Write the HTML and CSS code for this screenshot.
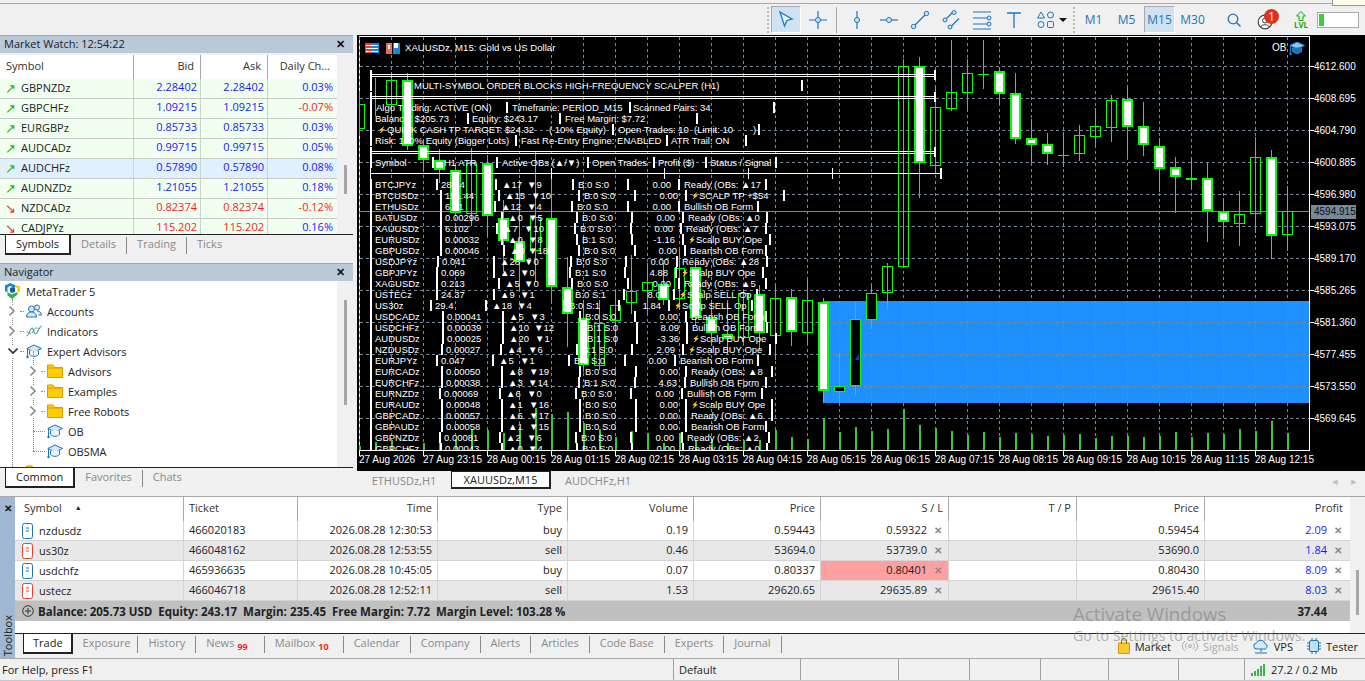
FILE: index.html
```html
<!DOCTYPE html>
<html lang="en">
<head>
    <meta charset="UTF-8">
    <title>MetaTrader 5</title>
    <link rel="stylesheet" href="styles.css">
</head>
<body>
    <svg class="defs" width="0" height="0">
        <symbol id="cap" viewBox="0 0 16 16">
            <path d="M8 2l7.5 3.5L8 9 .8 5.5z" fill="#d5e8f6" stroke="#1b75bb"/>
            <path d="M3.5 7.5v4c2 2.5 7 2.5 9 0v-4" fill="#eef6fc" stroke="#1b75bb"/>
            <path d="M1.5 6v7" stroke="#1b75bb"/>
            <circle cx="1.5" cy="14" r="1.2" fill="#1b75bb"/>
        </symbol>
        <symbol id="cap-on" viewBox="0 0 16 16">
            <path d="M8 2l7.5 3.5L8 9 .8 5.5z" fill="#8cc4ee" stroke="#1b86d6"/>
            <path d="M3.5 7.5v4c2 2.5 7 2.5 9 0v-4" fill="#1b75bb" stroke="#1b86d6"/>
            <path d="M1.5 6v7" stroke="#1b86d6"/>
            <circle cx="1.5" cy="14" r="1.2" fill="#1b86d6"/>
        </symbol>
        <symbol id="folder" viewBox="0 0 16 14">
            <path d="M.5 1h5.5l1.5 2.5h8v10H.5z" fill="#ffcd00" stroke="#d99a00"/>
            <path d="M.5 4h15" stroke="#d99a00"/>
        </symbol>
        <symbol id="chev" viewBox="0 0 8 12">
            <path d="M1.5 1.5L6 6l-4.500 4.500" fill="none" stroke="#8a8a8a" stroke-width="1.600"/>
        </symbol>
        <symbol id="deal" viewBox="0 0 11 16">
            <rect x=".5" y=".5" width="10" height="15" rx="2" fill="#fff" stroke="currentColor"/>
            <path d="M4 5h3M4 8h3" stroke="currentColor"/>
        </symbol>
    </svg>

    <div class="topline"><div class="balloon"></div></div>

    <div class="toolbar">
        <span class="grip"></span>
        <button class="tool is-on">
            <svg width="20" height="20" viewBox="0 0 20 20"><path d="M4 2l12 7-5 1.500L8.500 16z" fill="#eaf3fa" stroke="#1b75bb" stroke-width="1.300"/></svg>
        </button>
        <button class="tool">
            <svg width="20" height="20" viewBox="0 0 20 20"><path d="M10 1v18M1 10h18" stroke="#1b75bb" stroke-width="1.200"/><circle cx="10" cy="10" r="2.500" fill="#cfe3f3" stroke="#1b75bb"/></svg>
        </button>
        <span class="tool-sep"></span>
        <button class="tool">
            <svg width="20" height="20" viewBox="0 0 20 20"><path d="M10 1v18" stroke="#1b75bb" stroke-width="1.200"/><circle cx="10" cy="10" r="2.500" fill="#cfe3f3" stroke="#1b75bb"/></svg>
        </button>
        <button class="tool tight-1">
            <svg width="20" height="20" viewBox="0 0 20 20"><path d="M1 10h18" stroke="#1b75bb" stroke-width="1.200"/><circle cx="10" cy="10" r="2.500" fill="#cfe3f3" stroke="#1b75bb"/></svg>
        </button>
        <button class="tool">
            <svg width="20" height="20" viewBox="0 0 20 20"><path d="M4.500 15.500l11-11" stroke="#1b75bb" stroke-width="1.200"/><circle cx="3.500" cy="16.500" r="2.200" fill="#cfe3f3" stroke="#1b75bb"/><circle cx="16.500" cy="3.500" r="2.200" fill="#cfe3f3" stroke="#1b75bb"/></svg>
        </button>
        <button class="tool tight-2">
            <svg width="20" height="20" viewBox="0 0 20 20"><path d="M3.500 9.500l7-7M8 17.500l9-9" stroke="#1b75bb" stroke-width="1.200"/><circle cx="12" cy="2.500" r="2" fill="#cfe3f3" stroke="#1b75bb"/><circle cx="3" cy="10" r="2" fill="#cfe3f3" stroke="#1b75bb"/><circle cx="8" cy="17" r="2" fill="#cfe3f3" stroke="#1b75bb"/></svg>
        </button>
        <button class="tool">
            <svg width="20" height="20" viewBox="0 0 20 20"><path d="M1 2h18M1 8h15M1 14h15M1 19h18" stroke="#1b75bb" stroke-width="1.200"/><circle cx="17" cy="8" r="2" fill="#cfe3f3" stroke="#1b75bb"/><circle cx="17" cy="14" r="2" fill="#cfe3f3" stroke="#1b75bb"/></svg>
        </button>
        <button class="tool">
            <svg width="20" height="20" viewBox="0 0 20 20"><path d="M3 3h14M10 3v15" stroke="#1b75bb" stroke-width="1.300"/></svg>
        </button>
        <button class="tool tool-shapes">
            <svg width="20" height="20" viewBox="0 0 20 20" fill="#e6f0f8" stroke="#1b75bb"><path d="M5 2l3.500 6h-7z"/><circle cx="14.500" cy="5" r="3"/><circle cx="5" cy="14.500" r="3"/><rect x="11.500" y="11.500" width="6" height="6" rx="1"/></svg>
            <i class="caret"></i>
        </button>
        <span class="grip"></span>
        <button class="tool period">M1</button>
        <button class="tool period">M5</button>
        <button class="tool period is-on">M15</button>
        <button class="tool period">M30</button>
        <button class="tool tool-search">
            <svg width="16" height="16" viewBox="0 0 16 16"><circle cx="7" cy="7" r="4.800" fill="none" stroke="#1b75bb" stroke-width="1.300"/><path d="M10.500 10.500l4 4" stroke="#1b75bb" stroke-width="1.400"/></svg>
        </button>
        <div class="profile">
            <svg width="16" height="16" viewBox="0 0 16 16"><circle cx="8" cy="8" r="6.800" fill="#fff" stroke="#444" stroke-width="1.200"/><circle cx="8" cy="6.500" r="2.500" fill="none" stroke="#444"/><path d="M3.500 13c1-3 8-3 9 0" fill="none" stroke="#444"/></svg>
            <span class="badge">1</span>
        </div>
        <div class="lvl">
            <svg width="12" height="10" viewBox="0 0 12 10"><path d="M6 .5L10.500 5H8v4.500H4V5H1.500z" fill="#d7f5d7" stroke="#18a818"/></svg>
            <span>LVL</span>
        </div>
        <div class="meter"><span class="meter-fill"></span></div>
    </div>

    <div class="main">
        <aside class="side">
            <section class="panel watch">
                <div class="panel-title">Market Watch: 12:54:22<span class="panel-x">✕</span></div>
                <div class="watch-body">
                    <div class="watch-table">
                        <div class="watch-head">
                            <span class="col-sym">Symbol</span><span>Bid</span><span>Ask</span><span>Daily Ch...</span>
                        </div>
                        <div class="watch-row"><span class="col-sym"><i class="up">↗</i>GBPNZDz</span><span class="blue">2.28402</span><span class="blue">2.28402</span><span class="blue">0.03%</span></div>
                        <div class="watch-row"><span class="col-sym"><i class="up">↗</i>GBPCHFz</span><span class="blue">1.09215</span><span class="blue">1.09215</span><span class="red">-0.07%</span></div>
                        <div class="watch-row"><span class="col-sym"><i class="up">↗</i>EURGBPz</span><span class="blue">0.85733</span><span class="blue">0.85733</span><span class="blue">0.03%</span></div>
                        <div class="watch-row"><span class="col-sym"><i class="up">↗</i>AUDCADz</span><span class="blue">0.99715</span><span class="blue">0.99715</span><span class="blue">0.05%</span></div>
                        <div class="watch-row is-sel"><span class="col-sym"><i class="up">↗</i>AUDCHFz</span><span class="blue">0.57890</span><span class="blue">0.57890</span><span class="blue">0.08%</span></div>
                        <div class="watch-row"><span class="col-sym"><i class="up">↗</i>AUDNZDz</span><span class="blue">1.21055</span><span class="blue">1.21055</span><span class="blue">0.18%</span></div>
                        <div class="watch-row"><span class="col-sym"><i class="down">↘</i>NZDCADz</span><span class="red">0.82374</span><span class="red">0.82374</span><span class="red">-0.12%</span></div>
                        <div class="watch-row"><span class="col-sym"><i class="down">↘</i>CADJPYz</span><span class="red">115.202</span><span class="red">115.202</span><span class="blue">0.16%</span></div>
                    </div>
                    <div class="scroll"><span class="thumb thumb-watch"></span></div>
                </div>
                <div class="tabs">
                    <span class="tab is-on">Symbols</span><span class="tab">Details</span><span class="tab">Trading</span><span class="tab">Ticks</span>
                </div>
            </section>

            <section class="panel nav">
                <div class="panel-title">Navigator<span class="panel-x">✕</span></div>
                <div class="nav-body">
                    <div class="tree">
                        <div class="node root">
                            <svg class="node-icon" width="15" height="16" viewBox="0 0 15 16"><path d="M0 2.500L5 0l5 2v3L5 3 2.500 4.500v5L0 8z" fill="#1b86d6"/><path d="M10 2l5 1.500v5l-2.500 1V5L10 4z" fill="#ffc800"/><path d="M2.500 9l4 2.500L12.500 9v2.500L7 16 2.500 12.500z" fill="#2bb24c"/><path d="M5 5l3-1 2 1v4l-3 1-2-1z" fill="#1b5fa8"/></svg>
                            <span>MetaTrader 5</span>
                        </div>
                        <div class="node lvl1"><svg class="chev" width="8" height="12"><use href="#chev"/></svg><i class="dots"></i>
                            <svg class="node-icon" width="16" height="16" viewBox="0 0 16 16" fill="#d5e8f6" stroke="#1b75bb"><circle cx="5.500" cy="6" r="3"/><circle cx="11" cy="4.500" r="2.500"/><path d="M.5 14c0-3 2-5 5-5s5 2 5 5zM11 8c2.500 0 4.500 1.500 4.500 4h-3"/></svg>
                            <span>Accounts</span>
                        </div>
                        <div class="node lvl1"><svg class="chev" width="8" height="12"><use href="#chev"/></svg><i class="dots"></i>
                            <svg class="node-icon" width="16" height="16" viewBox="0 0 16 16" fill="none"><path d="M.5 13C3 13 4 5 6 5s1.500 6 3.500 6 2.500-6 6-8" stroke="#1b75bb"/><path d="M.5 9C3 9 4 12 6 10s2-5 4-5 3 1 5.500 0" stroke="#2bb24c" stroke-dasharray="2 1"/></svg>
                            <span>Indicators</span>
                        </div>
                        <div class="node lvl1"><svg class="chev" width="10" height="12" viewBox="0 0 10 12"><path d="M.5 3.500L5 8l4.500-4.500" fill="none" stroke="#333" stroke-width="1.600"/></svg><i class="dots dots-open"></i>
                            <svg class="node-icon" width="16" height="16"><use href="#cap"/></svg>
                            <span>Expert Advisors</span>
                        </div>
                        <div class="node lvl2"><svg class="chev" width="8" height="12"><use href="#chev"/></svg><i class="dots"></i>
                            <svg class="node-icon" width="16" height="14"><use href="#folder"/></svg>
                            <span>Advisors</span>
                        </div>
                        <div class="node lvl2"><svg class="chev" width="8" height="12"><use href="#chev"/></svg><i class="dots"></i>
                            <svg class="node-icon" width="16" height="14"><use href="#folder"/></svg>
                            <span>Examples</span>
                        </div>
                        <div class="node lvl2"><svg class="chev" width="8" height="12"><use href="#chev"/></svg><i class="dots"></i>
                            <svg class="node-icon" width="16" height="14"><use href="#folder"/></svg>
                            <span>Free Robots</span>
                        </div>
                        <div class="node lvl2 leaf"><i class="elbow"></i>
                            <svg class="node-icon" width="16" height="16"><use href="#cap"/></svg>
                            <span>OB</span>
                        </div>
                        <div class="node lvl2 leaf"><i class="elbow"></i>
                            <svg class="node-icon" width="16" height="16"><use href="#cap"/></svg>
                            <span>OBSMA</span>
                        </div>
                        <div class="node lvl1 last"><svg class="node-icon" width="16" height="14"><use href="#folder"/></svg></div>
                    </div>
                    <div class="scroll"><span class="thumb thumb-nav"></span></div>
                </div>
                <div class="tabs">
                    <span class="tab is-on">Common</span><span class="tab">Favorites</span><span class="tab">Chats</span>
                </div>
            </section>
        </aside>

        <div class="chart-col">
            <div id="chart" class="chart"></div>
            <div class="chart-tabs">
                <span class="chart-tab">ETHUSDz,H1</span>
                <span class="chart-tab is-on">XAUUSDz,M15</span>
                <span class="chart-tab">AUDCHFz,H1</span>
                <span class="chart-arrows"><i>◂</i><i>▸</i></span>
            </div>
        </div>
    </div>

    <div class="toolbox">
        <div class="toolbox-side">
            <span class="toolbox-x">✕</span>
            <span class="toolbox-name">Toolbox</span>
        </div>
        <div class="toolbox-main">
            <div class="trade-wrap">
                <div class="trades">
                    <div class="trade-head">
                        <span class="left first">Symbol<i class="sort">▲</i></span><span class="left">Ticket</span><span>Time</span><span>Type</span><span>Volume</span><span>Price</span><span>S / L</span><span>T / P</span><span>Price</span><span>Profit</span>
                    </div>
                    <div class="trade-row">
                        <span class="left first"><svg class="deal buy" width="11" height="16"><use href="#deal"/></svg>nzdusdz</span><span class="left">466020183</span><span>2026.08.28 12:30:53</span><span>buy</span><span>0.19</span><span>0.59443</span><span class="has-x">0.59322<i class="x">✕</i></span><span></span><span>0.59454</span><span class="has-x prof">2.09<i class="x">✕</i></span>
                    </div>
                    <div class="trade-row alt">
                        <span class="left first"><svg class="deal sell" width="11" height="16"><use href="#deal"/></svg>us30z</span><span class="left">466048162</span><span>2026.08.28 12:53:55</span><span>sell</span><span>0.46</span><span>53694.0</span><span class="has-x">53739.0<i class="x">✕</i></span><span></span><span>53690.0</span><span class="has-x prof">1.84<i class="x">✕</i></span>
                    </div>
                    <div class="trade-row">
                        <span class="left first"><svg class="deal buy" width="11" height="16"><use href="#deal"/></svg>usdchfz</span><span class="left">465936635</span><span>2026.08.28 10:45:05</span><span>buy</span><span>0.07</span><span>0.80337</span><span class="has-x hit">0.80401<i class="x">✕</i></span><span></span><span>0.80430</span><span class="has-x prof">8.09<i class="x">✕</i></span>
                    </div>
                    <div class="trade-row alt">
                        <span class="left first"><svg class="deal sell" width="11" height="16"><use href="#deal"/></svg>ustecz</span><span class="left">466046718</span><span>2026.08.28 12:52:11</span><span>sell</span><span>1.53</span><span>29620.65</span><span class="has-x">29635.89<i class="x">✕</i></span><span></span><span>29615.40</span><span class="has-x prof">8.03<i class="x">✕</i></span>
                    </div>
                    <div class="trade-sum">
                        <svg width="12" height="12" viewBox="0 0 12 12"><circle cx="6" cy="6" r="5.300" fill="none" stroke="#333"/><path d="M3 6h6M6 3v6" stroke="#333"/></svg>
                        <span class="sum-text">Balance: 205.73 USD&nbsp; Equity: 243.17&nbsp; Margin: 235.45&nbsp; Free Margin: 7.72&nbsp; Margin Level: 103.28 %</span>
                        <span class="sum-total">37.44</span>
                    </div>
                </div>
                <div class="scroll"><span class="thumb thumb-trade"></span></div>
            </div>
            <div class="box-tabs">
                <span class="tab is-on">Trade</span>
                <span class="tab tab-short">Exposure</span>
                <span class="tab">History</span>
                <span class="tab tab-count">News<sub>99</sub></span>
                <span class="tab tab-count tab-mail">Mailbox<sub>10</sub></span>
                <span class="tab">Calendar</span>
                <span class="tab">Company</span>
                <span class="tab">Alerts</span>
                <span class="tab">Articles</span>
                <span class="tab">Code Base</span>
                <span class="tab">Experts</span>
                <span class="tab">Journal</span>
                <div class="services">
                    <span class="service">
                        <svg width="12" height="16" viewBox="0 0 12 16"><path d="M.5 5h11v10.500H.5z" fill="#ffc82c" stroke="#d99a00"/><path d="M3.500 6V3a2.500 2.500 0 015 0v3" fill="none" stroke="#8a6a00"/></svg>
                        Market
                    </span>
                    <span class="service off">
                        <svg width="16" height="12" viewBox="0 0 16 12" fill="none" stroke="#aaa"><circle cx="8" cy="6" r="1.500"/><path d="M5 3c-2 2-2 4 0 6M11 3c2 2 2 4 0 6M3 1c-3.500 3-3.500 7 0 10M13 1c3.500 3 3.500 7 0 10"/></svg>
                        Signals
                    </span>
                    <span class="service">
                        <svg width="16" height="15" viewBox="0 0 16 15" fill="none" stroke="#1b75bb"><path d="M4 10a3 3 0 01-.5-6A4.500 4.500 0 0112 4.500 3 3 0 0112.500 10z" fill="#d5e8f6"/><path d="M8 10v3M2 14h12"/></svg>
                        VPS
                    </span>
                    <span class="service">
                        <svg width="14" height="16" viewBox="0 0 14 16" fill="none" stroke="#1b75bb"><rect x="2.500" y="2.500" width="9" height="11" rx="1.500" fill="#bfe0f7"/><path d="M0 5h2.500M0 8h2.500M0 11h2.500M11.500 5H14M11.500 8H14M11.500 11H14M5 0v2.500M9 0v2.500M5 13.500V16M9 13.500V16"/></svg>
                        Tester
                    </span>
                </div>
            </div>
        </div>
    </div>

    <div class="status">
        <span class="st st-help">For Help, press F1</span>
        <span class="st st-default">Default</span>
        <span class="st st-a"></span>
        <span class="st st-b"></span>
        <span class="st st-b"></span>
        <span class="st st-c"></span>
        <span class="st st-d"></span>
        <span class="st st-e"></span>
        <span class="st st-conn">
            <svg width="14" height="12" viewBox="0 0 14 12" fill="#3bb54a"><rect x="0" y="9" width="2" height="3"/><rect x="3" y="7" width="2" height="5"/><rect x="6" y="5" width="2" height="7"/><rect x="9" y="2" width="2" height="10"/><rect x="12" y="0" width="2" height="12"/></svg>
            27.2 / 0.2 Mb
        </span>
    </div>

    <div class="watermark">
        <div class="wm-big">Activate Windows</div>
        <div class="wm-small">Go to Settings to activate Windows.</div>
    </div>

    <script src="chart.js"></script>
</body>
</html>
```

FILE: styles.css
```css
* {
    box-sizing: border-box;
}

html, body {
    margin: 0;
    height: 681px;
    overflow: hidden;
}

body {
    display: flex;
    flex-direction: column;
    position: relative;
    font: 11px "Open Sans", "Noto Sans", sans-serif;
    color: #222;
    background: #f0f0f0;
}

.defs {
    position: absolute;
}

.topline {
    height: 4px;
    flex: none;
    border-bottom: 1px solid #a8a8a8;
    position: relative;
}

.balloon {
    position: absolute;
    right: 0;
    top: 0;
    width: 33px;
    height: 6px;
    background: #fffde8;
    border: 1px solid #999;
    border-top: 0;
    border-right: 0;
}

/* toolbar */
.toolbar {
    height: 31px;
    flex: none;
    display: flex;
    align-items: center;
    justify-content: flex-end;
    padding-right: 6px;
}

.grip {
    width: 2px;
    height: 26px;
    border-left: 2px dotted #bbb;
    margin: 0 2px;
}

.tool {
    width: 30px;
    height: 27px;
    margin-right: 2px;
    padding: 0;
    border: 1px solid transparent;
    background: none;
    display: flex;
    align-items: center;
    justify-content: center;
    font: 12px "Open Sans", sans-serif;
    color: #1b75bb;
}

.tool.is-on {
    background: #cfe2f2;
    border-color: #a9a9a9 #fff #fff #a9a9a9;
}

.tool.tight-1 {
    margin-right: 1px;
}

.tool.tight-2 {
    margin-right: 0;
}

.tool-sep {
    width: 1px;
    height: 26px;
    background: #a8a8a8;
    margin: 0 5px 0 1px;
}

.tool-shapes {
    width: 38px;
    justify-content: flex-start;
    padding-left: 4px;
}

.caret {
    width: 0;
    height: 0;
    margin-left: 3px;
    border: 4px solid transparent;
    border-top: 4px solid #111;
    border-bottom: 0;
}

.period {
    width: 31px;
    margin: 0 1px;
}

.tool-search {
    margin-left: 10px;
}

.profile {
    width: 28px;
    height: 26px;
    position: relative;
    padding-top: 7px;
    margin: 0 4px 0 6px;
}

.badge {
    position: absolute;
    left: 7px;
    top: 2px;
    width: 15px;
    height: 15px;
    border-radius: 50%;
    background: #e0301e;
    color: #fff;
    font-size: 12px;
    line-height: 15px;
    text-align: center;
}

.lvl {
    width: 24px;
    display: flex;
    flex-direction: column;
    align-items: center;
    font-size: 8px;
    line-height: 8px;
    font-weight: 700;
    color: #18a818;
    margin-right: 4px;
}

.meter {
    width: 42px;
    height: 16px;
    background: #fff;
    border: 1px solid #aaa;
    padding: 1px;
}

.meter-fill {
    display: block;
    width: 5px;
    height: 100%;
    background: #3ccf3c;
}

/* main area */
.main {
    height: 461px;
    flex: none;
    display: flex;
}

.side {
    width: 357px;
    flex: none;
    padding-right: 4px;
    display: flex;
    flex-direction: column;
}

.panel {
    display: flex;
    flex-direction: column;
    border-top: 1px solid #a8a8a8;
}

.watch {
    height: 228px;
}

.nav {
    height: 233px;
}

.panel-title {
    height: 17px;
    flex: none;
    background: #b9c9d8;
    padding: 0 4px;
    line-height: 16px;
    display: flex;
    justify-content: space-between;
}

.panel-x {
    font-size: 11px;
    font-weight: 700;
    color: #111;
    margin-right: 4px;
}

.watch-body, .nav-body {
    flex: 1;
    display: flex;
    min-height: 0;
    overflow: hidden;
}

.watch-body {
    padding-top: 2px;
}

.nav-body {
    padding-top: 2px;
}

.watch-table, .tree {
    width: 337px;
    flex: none;
    background: #fff;
    overflow: hidden;
}

.watch-head, .watch-row {
    display: grid;
    grid-template-columns: 134px 67px 67px 69px;
}

.watch-head {
    height: 24px;
    line-height: 22px;
}

.watch-head span {
    text-align: right;
    padding-right: 6px;
    border-right: 1px solid #a8a8a8;
    color: #333;
}

.watch-head span:last-child {
    border-right: 0;
    padding-right: 7px;
}

.watch-head .col-sym {
    text-align: left;
    padding-left: 6px;
}

.watch-row {
    height: 20px;
    line-height: 16px;
    background: #f0fff0;
    border-bottom: 1px solid #c8c8c8;
}

.watch-row.is-sel {
    background: #e0f0ff;
}

.watch-row span {
    text-align: right;
    padding-right: 3px;
    border-right: 1px solid #c8d8c8;
}

.watch-row span:last-child {
    border-right: 0;
    padding-right: 4px;
}

.watch-row .col-sym {
    text-align: left;
    padding-left: 5px;
    padding-bottom: 2px;
    color: #222;
    display: flex;
    align-items: center;
}

.col-sym i {
    width: 16px;
    font-style: normal;
    font-size: 13px;
}

.up {
    color: #14b814;
}

.down {
    color: #e8402a;
}

.blue, .prof {
    color: #1a1aff;
}

.red {
    color: #ff1a1a;
}

.scroll {
    flex: 1;
    display: flex;
    justify-content: center;
    position: relative;
}

.thumb {
    position: absolute;
    width: 3px;
    background: #a6a6a6;
}

.thumb-watch {
    top: 110px;
    height: 29px;
}

.thumb-nav {
    top: 17px;
    height: 105px;
}

.thumb-trade {
    top: 73px;
    height: 45px;
}

.tabs {
    height: 29px;
    flex: none;
    display: flex;
    border-top: 1px solid #222;
    padding-left: 5px;
    color: #8a8a8a;
}

.tab {
    padding: 0 10px;
    height: 17px;
    margin-top: 2px;
    line-height: 14px;
    border-right: 1px solid #8a8a8a;
}

.tab:last-child {
    border-right: 0;
}

.tab.is-on {
    height: 20px;
    margin-top: 0;
    line-height: 17px;
    background: #fff;
    color: #222;
    border: 1px solid #222;
    border-top: 0;
    border-width: 0 2px 2px 1px;
    padding: 0 10px;
}

.tab.is-on + .tab {
    border-left: 0;
}

/* navigator tree */
.tree {
    position: relative;
    margin-top: -2px;
}

.tree::before {
    content: "";
    position: absolute;
    left: 12px;
    top: 18px;
    bottom: 0;
    border-left: 1px dotted #888;
}

.node {
    height: 20px;
    display: flex;
    align-items: center;
    padding-left: 5px;
    position: relative;
}

.node span {
    margin-left: 5px;
}

.root span {
    margin-left: 6px;
}

.lvl1 {
    padding-left: 8px;
}

.lvl2 {
    padding-left: 29px;
}

.lvl2::before {
    content: "";
    position: absolute;
    left: 33px;
    top: -10px;
    height: 20px;
    border-left: 1px dotted #888;
}

.lvl1 .chev, .lvl2 .chev {
    background: #fff;
    position: relative;
    z-index: 1;
}

.dots {
    width: 4px;
    margin: 0 2px 0 4px;
    border-top: 1px dotted #888;
}

.dots-open {
    margin-left: 2px;
}

.leaf {
    padding-left: 33px;
}

.elbow {
    width: 12px;
    margin-right: 2px;
    border-top: 1px dotted #888;
}

.last {
    padding-left: 26px;
    align-items: flex-start;
    padding-top: 4px;
}

/* chart */
.chart-col {
    flex: 1;
    display: flex;
    flex-direction: column;
}

.chart {
    height: 436px;
    background: #000;
    flex: none;
}

.chart svg {
    display: block;
}

.dash {
    font: 9.500px "Liberation Sans", sans-serif;
    fill: #fff;
}

.bolt {
    font-size: 6.500px;
}

.axis {
    font: 10px "Liberation Sans", sans-serif;
    fill: #fff;
}

.chart-title {
    font: 9.600px "Liberation Sans", sans-serif;
    fill: #fff;
}

.price-tag {
    font: 10px "Liberation Sans", sans-serif;
    fill: #111;
}

.chart-tabs {
    height: 25px;
    flex: none;
    display: flex;
    align-items: flex-start;
    color: #8a8a8a;
    position: relative;
}

.chart-tab {
    width: 94px;
    height: 18px;
    line-height: 20px;
    text-align: center;
}

.chart-tab.is-on {
    width: 100px;
    background: #fff;
    color: #222;
    border: 1px solid #222;
    border-width: 1px 2px 2px 1px;
    line-height: 16px;
}

.chart-tab:last-of-type {
    width: 96px;
}

.chart-arrows {
    margin-left: auto;
    padding: 2px 8px 0 0;
    display: flex;
    gap: 13px;
    color: #c0c0c0;
}

.chart-arrows i {
    font-style: normal;
}

/* toolbox */
.toolbox {
    height: 162px;
    flex: none;
    display: flex;
    border-top: 1px solid #a8a8a8;
}

.toolbox-side {
    width: 15px;
    flex: none;
    background: #a0b8d4;
    display: flex;
    flex-direction: column;
    justify-content: space-between;
    align-items: center;
    padding: 4px 0 2px;
}

.toolbox-x {
    font-size: 10px;
    font-weight: 700;
    color: #111;
}

.toolbox-name {
    writing-mode: vertical-rl;
    transform: rotate(180deg);
    color: #222;
}

.toolbox-main {
    flex: 1;
    display: flex;
    flex-direction: column;
    min-width: 0;
}

.trade-wrap {
    height: 136px;
    flex: none;
    display: flex;
}

.trades {
    width: 1335px;
    flex: none;
    background: #fff;
}

.trade-head, .trade-row {
    display: grid;
    grid-template-columns: 169px 114px 140px 130px 126px 127px 128px 128px 128px 143px;
    text-align: right;
}

.trade-head {
    height: 24px;
    line-height: 22px;
    color: #333;
}

.trade-head span {
    padding-right: 5px;
    border-right: 1px solid #a8a8a8;
}

.trade-head span:last-child {
    border-right: 0;
}

.trade-row {
    height: 20px;
    line-height: 18px;
    border-bottom: 1px solid #d4d4d4;
}

.trade-row span {
    padding-right: 5px;
    border-right: 1px solid #d4d4d4;
    display: block;
}

.trade-row span:last-child {
    border-right: 0;
}

.trade-row.alt {
    background: #e8e8e8;
}

.trades .left {
    text-align: left;
    padding-left: 5px;
}

.trades .first {
    padding-left: 9px;
}

.trade-row .first {
    display: flex;
    align-items: center;
    padding-left: 7px;
}

.sort {
    font-style: normal;
    font-size: 7px;
    margin-left: 13px;
    vertical-align: 2px;
    color: #222;
}

.deal {
    margin-right: 6px;
    flex: none;
}

.buy {
    color: #1b75bb;
}

.sell {
    color: #e8402a;
}

.trade-row .has-x {
    padding-right: 3px;
}

.x {
    display: inline-block;
    width: 14px;
    margin-left: 4px;
    font-style: normal;
    font-size: 10px;
    font-weight: 700;
    color: #8a8a8a;
    text-align: center;
}

.trade-row .hit {
    background: #ffa0a0;
}

.trade-sum {
    height: 20px;
    background: #c0c0c0;
    display: flex;
    align-items: center;
    padding-left: 7px;
    font-size: 11.500px;
    font-weight: 700;
    gap: 4px;
}

.sum-total {
    margin-left: auto;
    padding-right: 23px;
}

.box-tabs {
    flex: 1;
    display: flex;
    border-top: 1px solid #222;
    margin-top: 0;
    padding-left: 8px;
    color: #8a8a8a;
}

.box-tabs .is-on {
    padding: 0 8px 0 9px;
}

.box-tabs .tab-short {
    padding-right: 7px;
}

.tab-count {
    padding-right: 16px;
}

.box-tabs .tab-mail {
    padding-right: 14px;
}

.box-tabs sub {
    font-size: 9px;
    font-weight: 700;
    color: #ff1a1a;
    margin-left: 3px;
    line-height: 0;
}

.services {
    margin-left: auto;
    display: flex;
    align-items: center;
    padding-right: 7px;
    gap: 14px;
    color: #222;
}

.service {
    display: flex;
    align-items: center;
    gap: 5px;
}

.service.off {
    color: #aaa;
    margin-left: -3px;
}

/* status bar */
.status {
    flex: 1;
    display: grid;
    grid-template-columns: 674px 127px 98px 71px 71px 68px 70px 66px 1fr;
    border-top: 1px solid #a8a8a8;
    border-bottom: 1px solid #c8c8c8;
    line-height: 21px;
}

.st {
    padding-left: 2px;
    border-right: 1px solid #a0a0a0;
}

.st-default {
    padding-left: 5px;
}

.st-conn {
    border-right: 0;
    padding-left: 6px;
    display: flex;
    align-items: center;
    gap: 6px;
}

/* activation notice over the window */
.watermark {
    position: absolute;
    left: 1073px;
    top: 602px;
    color: rgba(120, 120, 120, 0.55);
    pointer-events: none;
}

.wm-big {
    font-size: 18.700px;
    line-height: 24px;
}

.wm-small {
    font-size: 14.200px;
    line-height: 20px;
}
```

FILE: chart.js
```js
const NS = 'http://www.w3.org/2000/svg';
const svg = document.createElementNS(NS, 'svg');
svg.setAttribute('width', 1008);
svg.setAttribute('height', 436);
svg.setAttribute('viewBox', '357 35 1008 436');
document.getElementById('chart').appendChild(svg);

function el(parent, tag, attrs, text) {
    const node = document.createElementNS(NS, tag);
    for (const key in attrs) node.setAttribute(key, attrs[key]);
    if (text !== undefined) node.textContent = text;
    parent.appendChild(node);
    return node;
}

function rect(parent, x, y, w, h, fill) {
    return el(parent, 'rect', { x, y, width: w, height: h, fill, 'shape-rendering': 'crispEdges' });
}

const defs = el(svg, 'defs', {});
const clip = el(defs, 'clipPath', { id: 'plot' });
el(clip, 'rect', { x: 359, y: 36, width: 950, height: 415 });

// frame
rect(svg, 359, 36, 951, 1, '#fff');
rect(svg, 359, 36, 1, 415, '#fff');
rect(svg, 1309, 36, 1, 415, '#fff');
rect(svg, 359, 450, 951, 1, '#fff');

const plot = el(svg, 'g', { 'clip-path': 'url(#plot)' });

// order block zone
rect(plot, 823, 301, 487, 102, '#1e90ff');

// grid
for (let x = 359; x < 1309; x += 32) {
    el(plot, 'path', { d: `M${x + 0.5} 37V450`, stroke: '#778899', 'stroke-dasharray': '3 3', 'shape-rendering': 'crispEdges' });
}
for (let y = 66; y < 450; y += 32) {
    el(plot, 'path', { d: `M360 ${y + 0.5}H1309`, stroke: '#778899', 'stroke-dasharray': '3 3', 'shape-rendering': 'crispEdges' });
}

// volumes, one per bar from x = 359
const volumes = [446, 442, 440, 448, 443, 442, 440, 429, 430, 433, 430, 408, 414, 412, 423, 429, 437, 431, 433, 443, 433, 440, 440, 443, 440, 440, 430, 437, 439, 418, 432, 427, 431, 429, 409, 425, 428, 431, 435, 432, 437, 433, 434, 436, 435, 434, 438, 436, 436, 437, 436, 432, 437, 433, 434, 429, 431, 421, 433];
volumes.forEach((top, i) => rect(plot, 359 + i * 16, top, 2, 450 - top, '#32cd32'));

// bid line
rect(plot, 360, 211, 950, 1, '#778899');

// candles: wick top, body top, body bottom, wick bottom, white body
const candles = [
    [92, 104, 128, 135, 0], [78, 96, 96, 116, 0], [72, 80, 104, 114, 0], [73, 80, 146, 150, 1],
    [139, 145, 160, 171, 1], [149, 160, 170, 183, 1], [165, 170, 213, 216, 1], [148, 163, 213, 226, 0],
    [155, 163, 216, 236, 1], [200, 218, 241, 272, 1], [180, 241, 262, 290, 1], [151, 217, 250, 282, 0],
    [178, 218, 287, 302, 1], [257, 287, 314, 347, 1], [300, 318, 365, 372, 1], [300, 323, 365, 370, 0],
    [290, 305, 320, 343, 0], [255, 291, 302, 314, 0], [263, 282, 290, 315, 0], [263, 284, 300, 305, 1],
    [250, 268, 298, 310, 0], [258, 267, 318, 325, 1], [300, 317, 333, 345, 1], [300, 334, 339, 355, 1],
    [290, 293, 337, 343, 0], [285, 294, 333, 350, 1], [285, 298, 335, 360, 0], [289, 297, 332, 346, 1],
    [280, 300, 332, 343, 0], [298, 302, 391, 403, 1], [353, 386, 391, 403, 0], [302, 319, 385, 396, 0],
    [285, 293, 319, 329, 0], [263, 266, 292, 310, 0], [59, 66, 266, 267, 0], [57, 66, 163, 198, 1],
    [85, 107, 165, 173, 0], [40, 92, 108, 111, 0], [59, 73, 92, 110, 0], [40, 74, 74, 89, 0],
    [67, 71, 94, 104, 1], [73, 93, 139, 144, 1], [119, 138, 145, 164, 1], [133, 144, 154, 165, 1],
    [132, 155, 155, 167, 0], [125, 135, 153, 161, 0], [108, 126, 136, 147, 0], [95, 100, 127, 142, 0],
    [88, 99, 127, 157, 1], [102, 126, 145, 156, 1], [138, 146, 169, 192, 1], [157, 167, 177, 213, 1],
    [157, 178, 179, 190, 1], [162, 178, 211, 242, 1], [198, 211, 222, 239, 1], [191, 214, 223, 246, 0],
    [137, 157, 213, 233, 0], [150, 157, 236, 259, 1], [186, 211, 234, 251, 0]
];
candles.forEach(([wt, bt, bb, wb, white], i) => {
    const x = 359 + i * 16;
    rect(plot, x, wt, 1, wb - wt, '#0f0');
    if (bb - bt < 2) {
        rect(plot, x - 5, bt, 11, white ? 2 : 1, '#0f0');
        return;
    }
    if (white) {
        rect(plot, x - 5, bt, 11, bb - bt, '#0f0');
        rect(plot, x - 3, bt + 2, 7, bb - bt - 4, '#fff');
    } else {
        const overZone = x >= 823 && bb > 301;
        el(plot, 'rect', {
            x: x - 4.5, y: bt + 0.5, width: 10, height: bb - bt,
            fill: overZone ? '#000' : 'none', stroke: '#0f0', 'shape-rendering': 'crispEdges'
        });
    }
});
el(plot, 'path', { d: 'M855 360l4-6v6z', fill: '#0a3cd8' });

// dashboard frame lines
const dash = el(plot, 'g', {});
[74, 76, 96, 98, 151, 153].forEach(y => rect(dash, 370, y, 564, 1, '#fff'));
rect(dash, 370, 173, 570, 1, '#fff');
[[934, 70], [934, 92], [934, 147], [370, 70], [370, 92], [370, 147]].forEach(([x, y]) => rect(dash, x, y, 2, 10, '#fff'));
[370, 551, 664, 748, 832, 940].forEach(x => rect(dash, x, 168, x === 940 ? 2 : 1, 11, '#fff'));

function pipe(x, y) {
    rect(dash, x, y - 5, 2, 11, '#fff');
}

function label(x, y, text, anchor) {
    const attrs = { x, y: y + 4, class: 'dash' };
    if (anchor) attrs['text-anchor'] = anchor;
    if (text.startsWith('⚡')) {
        el(dash, 'text', { x, y: y + 3, class: 'dash bolt' }, '⚡');
        text = text.slice(1).trim();
        if (!text) return;
        attrs.x = x + 8;
    }
    el(dash, 'text', attrs, text);
}

label(414, 85, 'MULTI-SYMBOL ORDER BLOCKS HIGH-FREQUENCY SCALPER (H1)');
pipe(370, 85);
pipe(801, 85);

const panelLines = [
    [107, [[376, 'Algo Trading: ACTIVE (ON)'], [512, 'Timeframe: PERIOD_M15'], [633, 'Scanned Pairs: 34']], [370, 506, 629, 773]],
    [118, [[375, 'Balance: $205.73'], [472, 'Equity: $243.17'], [565, 'Free Margin: $7.72']], [370, 467, 559, 696]],
    [129, [[378, '⚡'], [387, 'QUICK CASH TP TARGET: $24.32'], [549, '( 10% Equity)'], [618, 'Open Trades: 10'], [694, '(Limit: 10'], [753, ')']], [370, 612, 758]],
    [140, [[375, 'Risk: 100% Equity (Bigger Lots)'], [521, 'Fast Re-Entry Engine: ENABLED'], [671, 'ATR Trail: ON']], [370, 515, 666, 745]],
    [162, [[375, 'Symbol'], [444, 'H1 ATR'], [502, 'Active OBs (▲/▼)'], [592, 'Open Trades'], [658, 'Profit ($)'], [710, 'Status / Signal']], [370, 432, 496, 587, 653, 705, 775]]
];
panelLines.forEach(([y, texts, pipes]) => {
    texts.forEach(([x, t]) => label(x, y, t));
    pipes.forEach(x => pipe(x, y));
});

// symbol, atr, p1, p2, up, down, down x, p3, orders, p4, profit, p5, status, p6
const rows = [
    ['BTCJPYz', '28.14', 436, 495, '17', '9', 527, 572, 'B:0 S:0', 627, '0.00', 678, 'Ready (OBs: ▲17', 765],
    ['BTCUSDz', '151.44', 440, 498, '15', '10', 531, 578, 'B:0 S:0', 634, '0.00', 685, '⚡ SCALP TP +$54', 783],
    ['ETHUSDz', '6.41', 440, 494, '12', '4', 527, 571, 'B:0 S:0', 627, '0.00', 678, 'Bullish OB Form', 757],
    ['BATUSDz', '0.00296', 440, 501, '0', '5', 528, 576, 'B:0 S:0', 631, '0.00', 682, 'Ready (OBs: ▲0', 766],
    ['XAUUSDz', '6.102', 440, 496, '7', '10', 524, 574, 'B:0 S:0', 630, '0.00', 680, 'Ready (OBs: ▲7', 765],
    ['EURUSDz', '0.00032', 440, 501, '0', '8', 528, 576, 'B:1 S:0', 631, '-1.16', 682, '⚡ Scalp BUY Ope', 769],
    ['GBPUSDz', '0.00046', 440, 503, '0', '18', 528, 578, 'B:0 S:0', 634, '0.00', 684, 'Bearish OB Form', 765],
    ['USDJPYz', '0.041', 437, 493, '28', '0', 524, 570, 'B:0 S:0', 625, '0.00', 676, 'Ready (OBs: ▲28', 766],
    ['GBPJPYz', '0.069', 436, 493, '2', '0', 520, 569, 'B:1 S:0', 624, '4.88', 675, '⚡ Scalp BUY Ope', 762],
    ['XAGUSDz', '0.213', 436, 498, '5', '0', 524, 571, 'B:0 S:0', 627, '0.00', 678, 'Ready (OBs: ▲5', 765],
    ['USTECz', '24.37', 436, 493, '9', '1', 520, 569, 'B:0 S:1', 623, '8.03', 673, '⚡ Scalp SELL Op', 756],
    ['US30z', '29.4', 430, 485, '18', '4', 517, 563, 'B:0 S:1', 618, '1.84', 668, '⚡ Scalp SELL Op', 751],
    ['USDCADz', '0.00041', 442, 502, '5', '3', 530, 579, 'B:0 S:0', 634, '0.00', 685, 'Bearish OB Form', 765],
    ['USDCHFz', '0.00039', 442, 502, '10', '12', 534, 581, 'B:1 S:0', 636, '8.09', 686, 'Bullish OB Form', 766],
    ['AUDUSDz', '0.00025', 442, 502, '20', '1', 535, 581, 'B:1 S:0', 636, '-3.36', 686, '⚡ Scalp BUY Ope', 775],
    ['NZDUSDz', '0.00027', 441, 500, '4', '6', 528, 576, 'B:1 S:0', 631, '2.09', 682, '⚡ Scalp BUY Ope', 769],
    ['EURJPYz', '0.047', 436, 492, '5', '1', 520, 568, 'B:0 S:0', 624, '0.00', 674, 'Bearish OB Form', 757],
    ['EURCADz', '0.00050', 441, 501, '8', '19', 529, 579, 'B:0 S:0', 635, '0.00', 685, 'Ready (OBs: ▲8', 771],
    ['EURCHFz', '0.00038', 441, 501, '3', '14', 528, 578, 'B:1 S:0', 634, '4.63', 684, 'Bullish OB Form', 765],
    ['EURNZDz', '0.00069', 439, 499, '6', '0', 527, 575, 'B:0 S:0', 630, '0.00', 681, 'Bullish OB Form', 761],
    ['EURAUDz', '0.00048', 441, 501, '1', '16', 529, 579, 'B:0 S:0', 635, '0.00', 685, '⚡ Scalp BUY Ope', 771],
    ['GBPCADz', '0.00057', 441, 501, '6', '17', 529, 579, 'B:0 S:0', 635, '0.00', 685, 'Ready (OBs: ▲6', 771],
    ['GBPAUDz', '0.00058', 441, 501, '1', '15', 529, 579, 'B:0 S:0', 635, '0.00', 685, 'Bearish OB Form', 765],
    ['GBPNZDz', '0.00081', 439, 499, '2', '6', 527, 575, 'B:0 S:0', 630, '0.00', 681, 'Ready (OBs: ▲2', 768],
    ['GBPCHFz', '0.00043', 440, 501, '0', '4', 528, 576, 'B:0 S:0', 631, '0.00', 682, 'Ready (OBs: ▲0', 766]
];
rows.forEach((r, i) => {
    const y = 184 + i * 11;
    const [sym, atr, p1, p2, up, down, downX, p3, orders, p4, profit, p5, status, p6] = r;
    pipe(370, y);
    label(375, y, sym);
    pipe(p1, y);
    label(p1 + 5, y, atr);
    pipe(p2, y);
    label(p2 + 7, y, '▲' + up);
    label(downX, y, '▼' + down);
    pipe(p3, y);
    label(p3 + 6, y, orders);
    pipe(p4, y);
    label(p5 - 7, y, profit, 'end');
    pipe(p5, y);
    label(p5 + 6, y, status);
    pipe(p6, y);
});

// price axis
const prices = ['4612.600', '4608.695', '4604.790', '4600.885', '4596.980', '4593.075', '4589.170', '4585.265', '4581.360', '4577.455', '4573.550', '4569.645'];
prices.forEach((p, i) => {
    const y = 66 + i * 32;
    rect(svg, 1310, y, 4, 1, '#fff');
    el(svg, 'text', { x: 1314, y: y + 4, class: 'axis' }, p);
});
rect(svg, 1311, 205, 45, 14, '#778899');
el(svg, 'text', { x: 1314, y: 215, class: 'price-tag' }, '4594.915');

// time axis
const times = ['27 Aug 2026', '27 Aug 23:15', '28 Aug 00:15', '28 Aug 01:15', '28 Aug 02:15', '28 Aug 03:15', '28 Aug 04:15', '28 Aug 05:15', '28 Aug 06:15', '28 Aug 07:15', '28 Aug 08:15', '28 Aug 09:15', '28 Aug 10:15', '28 Aug 11:15', '28 Aug 12:15'];
times.forEach((t, i) => {
    const x = 359 + i * 64;
    rect(svg, x, 451, 1, 5, '#fff');
    el(svg, 'text', { x, y: 463, class: 'axis' }, t);
});

// chart corner: mode and save icons, title, expert badge
const corner = el(svg, 'g', { 'shape-rendering': 'crispEdges' });
rect(corner, 365, 43, 7, 10, '#e8402a');
rect(corner, 372, 43, 7, 10, '#1b86d6');
for (const y of [45, 48, 51]) rect(corner, 366, y, 12, 1, '#fff');
rect(corner, 386, 43, 6, 11, '#f06a5a');
rect(corner, 388, 45, 2, 4, '#fff');
rect(corner, 393, 43, 7, 11, '#1b86d6');
rect(corner, 394, 43, 4, 5, '#fff');
el(svg, 'text', { x: 405, y: 51, class: 'chart-title' }, 'XAUUSDz, M15:  Gold vs US Dollar');
el(svg, 'text', { x: 1272, y: 51, class: 'axis' }, 'OB');
const cap = el(svg, 'use', { x: 1289, y: 40, width: 16, height: 16 });
cap.setAttribute('href', '#cap-on');
```
